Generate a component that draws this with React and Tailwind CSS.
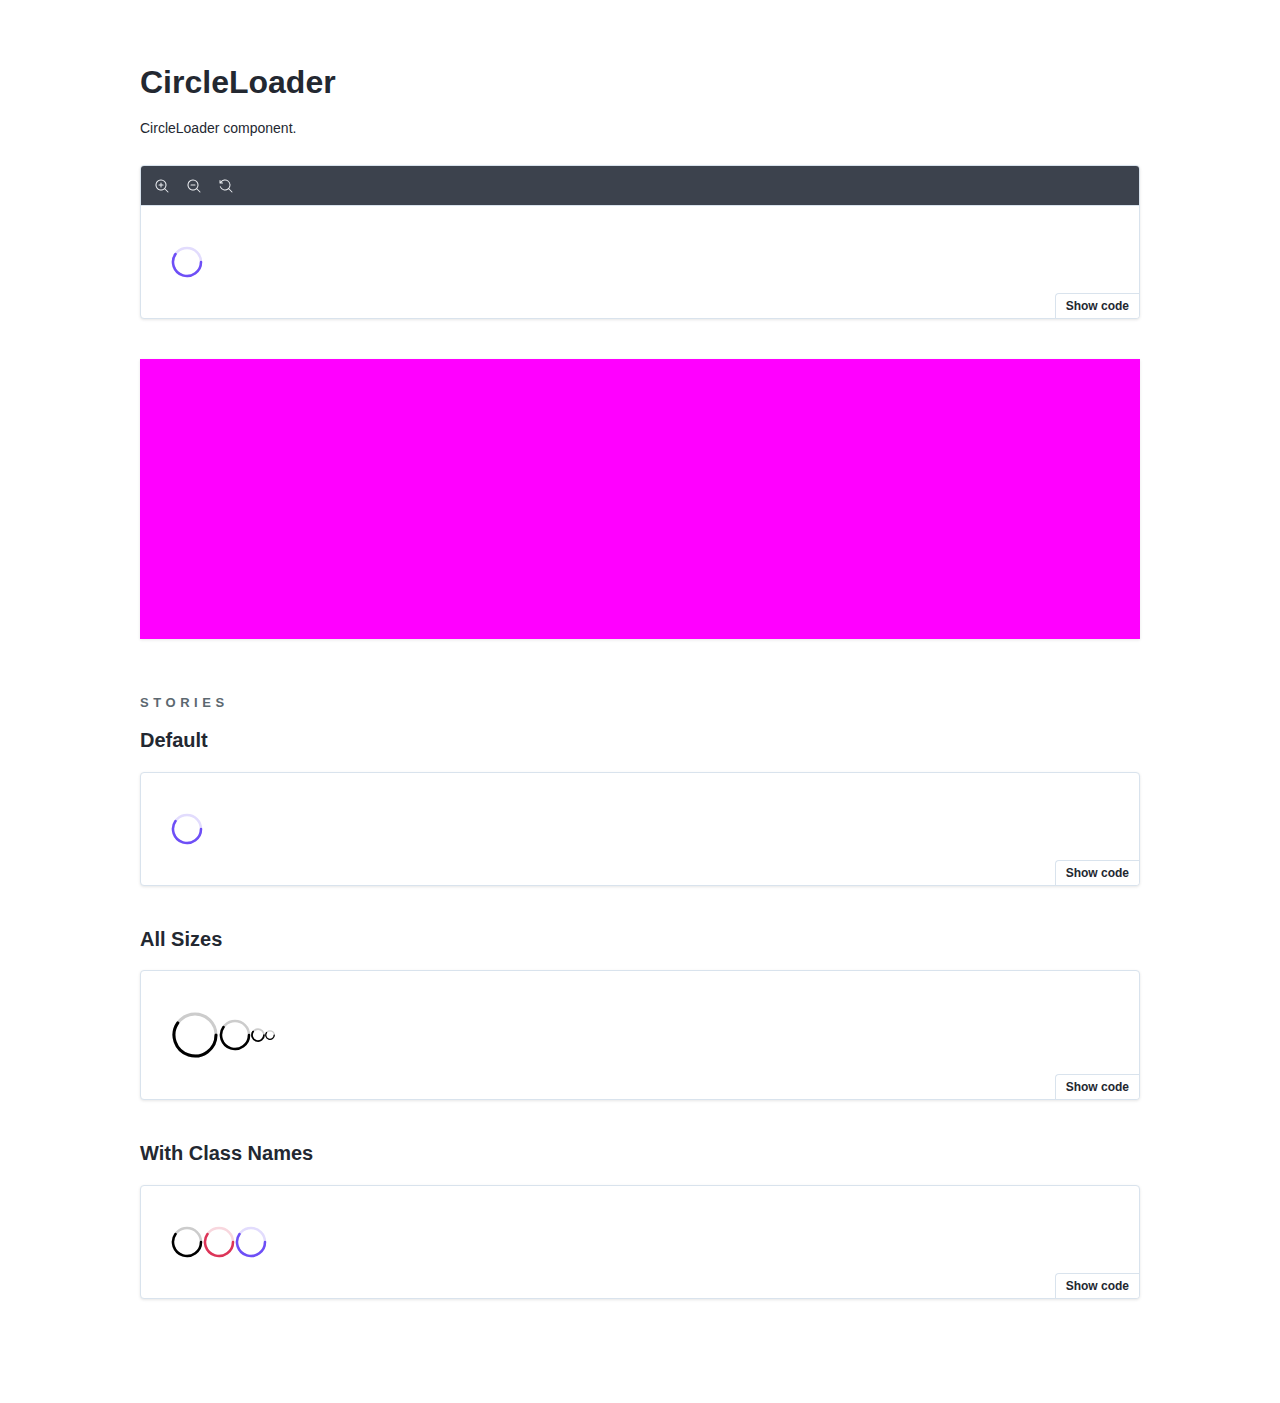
const HANDLE =
  'M9.544 10.206a5.5 5.5 0 11.662-.662.5.5 0 01.148.102l3 3a.5.5 0 01-.708.708l-3-3a.5.5 0 01-.102-.148zM10.5 6a4.5 4.5 0 10-9 0 4.5 4.5 0 009 0z';
const PLUS =
  'M6 3.5a.5.5 0 01.5.5v1.5H8a.5.5 0 010 1H6.5V8a.5.5 0 01-1 0V6.5H4a.5.5 0 010-1h1.5V4a.5.5 0 01.5-.5z';
const MINUS = 'M4 5.5a.5.5 0 000 1h4a.5.5 0 000-1H4z';
const RESET =
  'M1.5 2.837V1.5a.5.5 0 00-1 0V4a.5.5 0 00.5.5h2.5a.5.5 0 000-1H2.258a4.5 4.5 0 11-.496 4.016.5.5 0 10-.942.337 5.502 5.502 0 008.724 2.353.5.5 0 00.102.148l3 3a.5.5 0 00.708-.708l-3-3a.5.5 0 00-.148-.102A5.5 5.5 0 101.5 2.837z';

function ToolButton({ label, paths }) {
  return (
    <button aria-label={label} className="flex size-7 items-center justify-center">
      <svg viewBox="0 0 14 14" className="size-3.5 fill-[#eceef2]">
        {paths.map((d) => (
          <path key={d} d={d} />
        ))}
      </svg>
    </button>
  );
}

function Loader({ size = 32, r = 14, stroke = 2.5, color = 'text-[#6e4ff6]', track = 'text-[#e2dcfd]' }) {
  const c = size / 2;
  const a = (215 * Math.PI) / 180;
  const x = c + r * Math.cos(a);
  const y = c + r * Math.sin(a);
  return (
    <svg width={size} height={size} fill="none" stroke="currentColor" strokeWidth={stroke} className="shrink-0">
      <circle cx={c} cy={c} r={r} className={track} />
      <path d={`M${c + r} ${c}A${r} ${r} 0 1 1 ${x} ${y}`} strokeLinecap="round" className={color} />
    </svg>
  );
}

function Preview({ toolbar, className, children }) {
  return (
    <section
      className={`relative flex flex-col overflow-hidden rounded-[4px] border border-[#d9e3ed] bg-white shadow-[0_1px_3px_0_rgba(0,0,0,0.1)] ${className}`}
    >
      {toolbar && (
        <div className="flex h-10 shrink-0 items-center gap-1 border-b border-[#d9e3ed] bg-[#3c424d] px-[7px]">
          <ToolButton label="Zoom in" paths={[PLUS, HANDLE]} />
          <ToolButton label="Zoom out" paths={[MINUS, HANDLE]} />
          <ToolButton label="Reset zoom" paths={[RESET]} />
        </div>
      )}
      <div className="flex items-center px-[30px] pt-10">{children}</div>
      <button className="absolute right-0 bottom-0 h-[25px] rounded-tl-[4px] border-t border-l border-[#d9e3ed] bg-white px-2.5 text-xs leading-4 font-bold">
        Show code
      </button>
    </section>
  );
}

const black = { color: 'text-black', track: 'text-[#cccccc]' };

export default function App() {
  return (
    <main className="min-h-[1403px] bg-white pt-16 font-['Liberation_Sans',Arial,sans-serif] text-[#232831]">
      <div className="mx-auto w-[1000px]">
        <h1 className="h-9 text-[32px] leading-9 font-bold">CircleLoader</h1>
        <p className="mt-4 h-6 text-sm leading-6">CircleLoader component.</p>
        <Preview toolbar className="mt-[25px] h-[154px]">
          <Loader />
        </Preview>
        <div className="mt-10 h-[280px] bg-[#ff00ff] shadow-[0_1px_3px_0_rgba(0,0,0,0.1)]" />

        <h2 className="mt-14 h-4 text-[13px] leading-4 font-bold tracking-[0.35em] text-[#5c6870]">STORIES</h2>
        <h3 className="mt-[17px] h-6 text-xl leading-6 font-bold">Default</h3>
        <Preview className="mt-5 h-[114px]">
          <Loader />
        </Preview>

        <h3 className="mt-[41px] h-6 text-xl leading-6 font-bold">All Sizes</h3>
        <Preview className="mt-[19px] h-[130px]">
          <Loader size={48} r={21} stroke={3} {...black} />
          <Loader {...black} />
          <Loader size={14} r={6} stroke={1.75} {...black} />
          <Loader size={10} r={4.25} stroke={1.25} {...black} />
        </Preview>

        <h3 className="mt-[41px] h-6 text-xl leading-6 font-bold">With Class Names</h3>
        <Preview className="mt-5 h-[114px]">
          <Loader {...black} />
          <Loader color="text-[#dc3558]" track="text-[#f8d7de]" />
          <Loader />
        </Preview>
      </div>
    </main>
  );
}
